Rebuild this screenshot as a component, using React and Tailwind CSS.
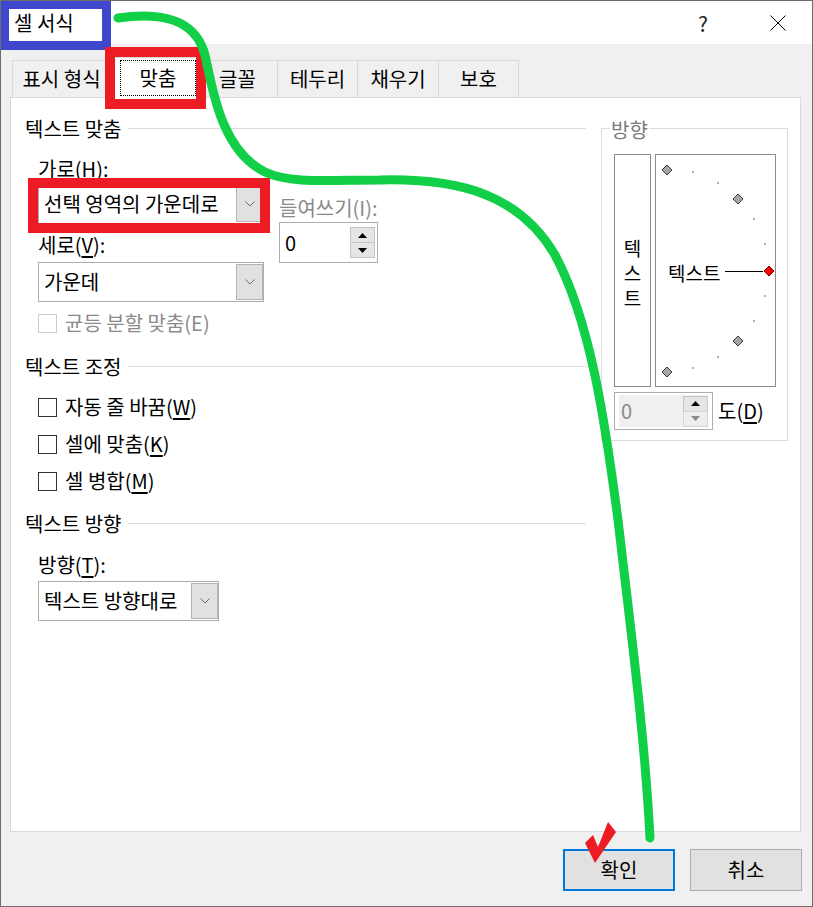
import React from "react";

function Chevron() {
  return (
    <svg width="10" height="6" viewBox="0 0 10 6">
      <polyline points="0.5,0.5 5,5 9.5,0.5" fill="none" stroke="#6b6b6b" strokeWidth="1" />
    </svg>
  );
}

function Tri({ up, color }) {
  return (
    <svg width="9" height="5" viewBox="0 0 9 5">
      <polygon points={up ? "0,5 4.5,0 9,5" : "0,0 4.5,5 9,0"} fill={color} />
    </svg>
  );
}

function Select({ className, children }) {
  return (
    <div className={"h-[40px] border border-[#adadad] bg-white flex items-center " + className}>
      <span className="flex-1 pl-[5px] leading-[24px] whitespace-nowrap">{children}</span>
      <div className="w-[27px] h-[36px] bg-[#e1e1e1] border border-[#b4b4b4] flex items-center justify-center shrink-0">
        <Chevron />
      </div>
    </div>
  );
}

function Header({ className = "", children }) {
  return (
    <div className={"flex items-center h-[24px] " + className}>
      <span className="leading-[24px] whitespace-nowrap">{children}</span>
      <div className="flex-1 h-px bg-[#dcdcdc] ml-[7px] -mt-[2px]" />
    </div>
  );
}

function Check({ label, disabled }) {
  return (
    <div className="flex items-center h-[20px]">
      <div
        className={
          "w-[19px] h-[19px] border bg-white shrink-0 " +
          (disabled ? "border-[#cccccc]" : "border-[#333333]")
        }
      />
      <span className={"ml-[8px] leading-[24px] whitespace-nowrap " + (disabled ? "text-[#8a8a8a]" : "")}>
        {label}
      </span>
    </div>
  );
}

function U({ children }) {
  return <span className="underline underline-offset-[3px]">{children}</span>;
}

function Diamond({ x, y, fill, stroke }) {
  return (
    <polygon
      points={`${x},${y - 5} ${x + 5},${y} ${x},${y + 5} ${x - 5},${y}`}
      fill={fill}
      stroke={stroke}
      strokeWidth="1"
    />
  );
}

export default function App() {
  const dots = [
    [37, 17],
    [62, 28],
    [98, 64],
    [109, 89],
    [109, 141],
    [98, 166],
    [62, 202],
    [37, 213],
  ];
  return (
    <div className="relative w-[813px] h-[907px] border border-[#6d6d6d] bg-[#f0f0f0] flex flex-col font-['Noto_Sans_CJK_KR',sans-serif] text-[20px] text-black overflow-hidden">
      {/* title bar */}
      <div className="h-[43px] bg-white flex items-center shrink-0">
        <span className="ml-[13px] text-[20px] leading-[24px]">셀 서식</span>
        <span className="ml-auto w-[20px] text-center text-[21px] leading-[24px] text-[#222]">?</span>
        <svg className="ml-[57px] mr-[26px]" width="16" height="16" viewBox="0 0 16 16">
          <line x1="0.5" y1="0.5" x2="15.5" y2="15.5" stroke="#000" strokeWidth="1" />
          <line x1="15.5" y1="0.5" x2="0.5" y2="15.5" stroke="#000" strokeWidth="1" />
        </svg>
      </div>

      {/* tabs */}
      <div className="flex items-end h-[37px] ml-[11px] mt-[16px] shrink-0">
        <div className="w-[98px] h-[37px] border-t border-l border-[#d9d9d9] flex items-center justify-center leading-[24px] whitespace-nowrap">
          표시 형식
        </div>
        <div className="relative z-10 w-[96px] h-[41px] -mb-px bg-white border-t border-x border-[#d9d9d9] flex items-center justify-center">
          <div className="w-[76px] h-[36px] border border-dotted border-black flex items-center justify-center leading-[24px]">
            맞춤
          </div>
        </div>
        <div className="w-[71px] h-[37px] border-t border-[#d9d9d9] flex items-center justify-center pr-[8px] leading-[24px]">
          글꼴
        </div>
        <div className="w-[80px] h-[37px] border-t border-l border-[#d9d9d9] flex items-center justify-center leading-[24px]">
          테두리
        </div>
        <div className="w-[81px] h-[37px] border-t border-l border-[#d9d9d9] flex items-center justify-center leading-[24px]">
          채우기
        </div>
        <div className="w-[81px] h-[37px] border-t border-x border-[#d9d9d9] flex items-center justify-center leading-[24px]">
          보호
        </div>
      </div>

      {/* panel */}
      <div className="ml-[9px] w-[791px] h-[735px] border border-[#d9d9d9] bg-white flex shrink-0">
        {/* left column */}
        <div className="ml-[14px] w-[561px] pt-[19px] flex flex-col shrink-0">
          <Header>텍스트 맞춤</Header>
          <div className="pl-[13px] mt-[16px] flex">
            <div className="w-[226px] flex flex-col">
              <div className="h-[24px] leading-[24px]">
                가로(<U>H</U>):
              </div>
              <Select className="mt-[3px] w-[226px]">선택 영역의 가운데로</Select>
              <div className="mt-[9px] h-[24px] leading-[24px]">
                세로(<U>V</U>):
              </div>
              <Select className="mt-[5px] w-[226px]">가운데</Select>
            </div>
            <div className="ml-[15px] pt-[39px] flex flex-col">
              <div className="h-[24px] leading-[24px] text-[#8a8a8a] whitespace-nowrap">들여쓰기(I):</div>
              <div className="mt-[2px] w-[99px] h-[41px] border border-[#adadad] bg-white flex items-center justify-between">
                <span className="pl-[5px] leading-[24px]">0</span>
                <div className="flex flex-col mr-[2px]">
                  <div className="w-[25px] h-[16px] bg-[#e5e5e5] border border-[#c4c4c4] flex items-center justify-center">
                    <Tri up color="#000" />
                  </div>
                  <div className="w-[25px] h-[16px] -mt-px bg-[#e5e5e5] border border-[#c4c4c4] flex items-center justify-center">
                    <Tri color="#000" />
                  </div>
                </div>
              </div>
            </div>
          </div>
          <div className="pl-[13px] mt-[11px]">
            <Check disabled label="균등 분할 맞춤(E)" />
          </div>

          <Header className="mt-[22px]">텍스트 조정</Header>
          <div className="pl-[13px] mt-[18px] flex flex-col gap-[17px]">
            <Check
              label={
                <>
                  자동 줄 바꿈(<U>W</U>)
                </>
              }
            />
            <Check
              label={
                <>
                  셀에 맞춤(<U>K</U>)
                </>
              }
            />
            <Check
              label={
                <>
                  셀 병합(<U>M</U>)
                </>
              }
            />
          </div>

          <Header className="mt-[21px]">텍스트 방향</Header>
          <div className="pl-[13px] mt-[17px] flex flex-col">
            <div className="h-[24px] leading-[24px]">
              방향(<U>T</U>):
            </div>
            <Select className="mt-[4px] w-[181px]">텍스트 방향대로</Select>
          </div>
        </div>

        {/* right group */}
        <div className="ml-[15px] mt-[30px] w-[187px] h-[313px] border border-[#dcdcdc] relative shrink-0">
          <span className="absolute left-[8px] top-[-11px] bg-white px-[1px] leading-[24px] text-[#7a7a7a]">
            방향
          </span>
          <div className="flex pl-[12px] pt-[25px]">
            <div className="w-[37px] h-[233px] border border-[#8c8c8c] flex flex-col items-center justify-center pt-[4px] text-[19px]">
              <span className="leading-[25px]">텍</span>
              <span className="leading-[25px]">스</span>
              <span className="leading-[25px]">트</span>
            </div>
            <div className="ml-[4px] w-[121px] h-[233px] border border-[#8c8c8c] relative">
              <svg className="absolute left-0 top-0" width="119" height="231" viewBox="0 0 119 231">
                {dots.map(([x, y], i) => (
                  <rect key={i} x={x - 1} y={y - 1} width="2" height="2" fill="#b0b0b0" />
                ))}
                <Diamond x={11} y={15} fill="#a6a6a6" stroke="#3c3c3c" />
                <Diamond x={82} y={44} fill="#a6a6a6" stroke="#3c3c3c" />
                <Diamond x={82} y={186} fill="#a6a6a6" stroke="#3c3c3c" />
                <Diamond x={11} y={217} fill="#a6a6a6" stroke="#3c3c3c" />
                <line x1="69" y1="116.5" x2="107" y2="116.5" stroke="#000" strokeWidth="1" />
                <Diamond x={113} y={116} fill="#ff0000" stroke="#7a0000" />
              </svg>
              <span className="absolute left-[12px] top-[106px] text-[19px] leading-[24px] whitespace-nowrap">텍스트</span>
            </div>
          </div>
          <div className="flex items-center pl-[12px] mt-[5px]">
            <div className="w-[99px] h-[38px] border border-[#adadad] bg-white px-[4px] py-[2px] flex">
              <div className="flex-1 bg-[#f0f0f0] flex items-center justify-between">
                <span className="pl-[2px] leading-[24px] text-[#8a8a8a]">0</span>
                <div className="flex flex-col">
                  <div className="w-[25px] h-[16px] bg-[#e5e5e5] border border-[#c4c4c4] flex items-center justify-center">
                    <Tri up color="#000" />
                  </div>
                  <div className="w-[25px] h-[16px] -mt-px bg-[#eeeeee] border border-[#d4d4d4] flex items-center justify-center">
                    <Tri color="#8a8a8a" />
                  </div>
                </div>
              </div>
            </div>
            <span className="ml-[5px] leading-[24px] whitespace-nowrap">
              도(<U>D</U>)
            </span>
          </div>
        </div>
      </div>

      {/* buttons */}
      <div className="flex mt-[17px] ml-[562px] gap-[15px] shrink-0">
        <div className="w-[112px] h-[42px] border-2 border-[#0078d7] bg-[#e1e1e1] flex items-center justify-center leading-[24px]">
          확인
        </div>
        <div className="w-[112px] h-[42px] border border-[#adadad] bg-[#e1e1e1] flex items-center justify-center leading-[24px]">
          취소
        </div>
      </div>

      {/* annotations */}
      <div className="absolute left-[-1px] top-[-1px] w-[111px] h-[50px] border-[9px] border-[#3f48cc] pointer-events-none" />
      <div className="absolute left-[104px] top-[46px] w-[101px] h-[62px] border-[10px] border-[#ed1c24] pointer-events-none z-20" />
      <div className="absolute left-[27px] top-[177px] w-[242px] h-[55px] border-[10px] border-[#ed1c24] pointer-events-none z-20" />
      <svg
        className="absolute left-[-1px] top-[-1px] pointer-events-none z-30"
        width="813"
        height="907"
        viewBox="0 0 813 907"
      >
        <path
          d="M118 18 C160 12 195 18 205 55 C212 85 220 150 265 172 C290 184 330 180 380 180 C460 178 520 195 555 255 C590 320 605 420 618 520 C632 640 645 740 650 838"
          fill="none"
          stroke="#12cf48"
          strokeWidth="9"
          strokeLinecap="round"
          strokeLinejoin="round"
        />
        <polygon points="585,843 593,835 598,847 608,822 616,832 595,863" fill="#ed1c24" />
      </svg>
    </div>
  );
}
